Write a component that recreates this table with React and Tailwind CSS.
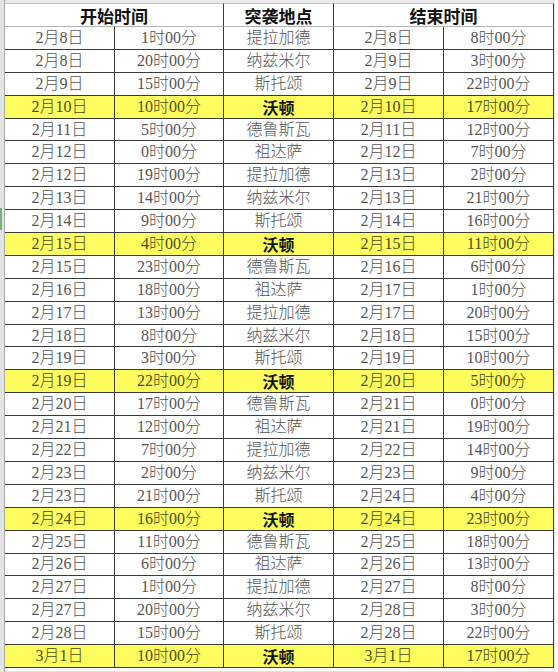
import React from "react";

const rows = [
  ["2月8日", "1时00分", "提拉加德", "2月8日", "8时00分"],
  ["2月8日", "20时00分", "纳兹米尔", "2月9日", "3时00分"],
  ["2月9日", "15时00分", "斯托颂", "2月9日", "22时00分"],
  ["2月10日", "10时00分", "沃顿", "2月10日", "17时00分", true],
  ["2月11日", "5时00分", "德鲁斯瓦", "2月11日", "12时00分"],
  ["2月12日", "0时00分", "祖达萨", "2月12日", "7时00分"],
  ["2月12日", "19时00分", "提拉加德", "2月13日", "2时00分"],
  ["2月13日", "14时00分", "纳兹米尔", "2月13日", "21时00分"],
  ["2月14日", "9时00分", "斯托颂", "2月14日", "16时00分"],
  ["2月15日", "4时00分", "沃顿", "2月15日", "11时00分", true],
  ["2月15日", "23时00分", "德鲁斯瓦", "2月16日", "6时00分"],
  ["2月16日", "18时00分", "祖达萨", "2月17日", "1时00分"],
  ["2月17日", "13时00分", "提拉加德", "2月17日", "20时00分"],
  ["2月18日", "8时00分", "纳兹米尔", "2月18日", "15时00分"],
  ["2月19日", "3时00分", "斯托颂", "2月19日", "10时00分"],
  ["2月19日", "22时00分", "沃顿", "2月20日", "5时00分", true],
  ["2月20日", "17时00分", "德鲁斯瓦", "2月21日", "0时00分"],
  ["2月21日", "12时00分", "祖达萨", "2月21日", "19时00分"],
  ["2月22日", "7时00分", "提拉加德", "2月22日", "14时00分"],
  ["2月23日", "2时00分", "纳兹米尔", "2月23日", "9时00分"],
  ["2月23日", "21时00分", "斯托颂", "2月24日", "4时00分"],
  ["2月24日", "16时00分", "沃顿", "2月24日", "23时00分", true],
  ["2月25日", "11时00分", "德鲁斯瓦", "2月25日", "18时00分"],
  ["2月26日", "6时00分", "祖达萨", "2月26日", "13时00分"],
  ["2月27日", "1时00分", "提拉加德", "2月27日", "8时00分"],
  ["2月27日", "20时00分", "纳兹米尔", "2月28日", "3时00分"],
  ["2月28日", "15时00分", "斯托颂", "2月28日", "22时00分"],
  ["3月1日", "10时00分", "沃顿", "3月1日", "17时00分", true],
];

const font = "font-['Liberation_Serif','Noto_Sans_CJK_SC',serif]";

export default function App() {
  return (
    <div className="w-[558px] h-[672px] bg-white flex overflow-hidden">
      <div className="w-[5px] h-full bg-[#e3e3e3] border-r border-[#a9a9a9] flex flex-col">
        <div className="h-[208px]" />
        <div className="h-[22px] w-[2px] bg-[#6fb283]" />
      </div>
      <div className="flex flex-col">
        <div className="h-[3px] bg-[#ebebeb]" />
        <div
          className={`grid grid-cols-[110px_109px_110px_110px_110px] grid-rows-[24px_repeat(28,minmax(0,1fr))] h-[665px] ${font}`}
        >
          <div className="col-span-2 border-t border-b border-r border-t-[#c4c4c4] border-b-[#b5b5b5] border-r-[#3a3a3a] flex items-center justify-center font-bold text-[17px] text-[#111] font-['Noto_Sans_CJK_SC',sans-serif] leading-none">
            开始时间
          </div>
          <div className="border-t border-b border-r border-t-[#c4c4c4] border-b-[#b5b5b5] border-r-[#3a3a3a] flex items-center justify-center font-bold text-[17px] text-[#111] font-['Noto_Sans_CJK_SC',sans-serif] leading-none">
            突袭地点
          </div>
          <div className="col-span-2 border-t border-b border-r border-t-[#c4c4c4] border-b-[#b5b5b5] border-r-[#3a3a3a] flex items-center justify-center font-bold text-[17px] text-[#111] font-['Noto_Sans_CJK_SC',sans-serif] leading-none">
            结束时间
          </div>
          {rows.map((r, i) => {
            const y = r[5] === true;
            return [0, 1, 2, 3, 4].map((c) => (
              <div
                key={i + "-" + c}
                className={`border-r border-b border-[#3a3a3a] flex items-center justify-center text-[16px] leading-none ${
                  y ? "bg-[#fdfd5e]" : "bg-white"
                } ${
                  y
                    ? c === 2
                      ? "font-bold text-[#141414] font-['Noto_Sans_CJK_SC',sans-serif]"
                      : "font-light text-[#4d4a1c]"
                    : "font-light text-[#555555]"
                }`}
              >
                {r[c]}
              </div>
            ));
          })}
        </div>
        <div className="h-[4px] border-b border-[#e0e0e0]" />
      </div>
      <div className="flex-1 h-full bg-white border-l border-[#ececec]" />
    </div>
  );
}
